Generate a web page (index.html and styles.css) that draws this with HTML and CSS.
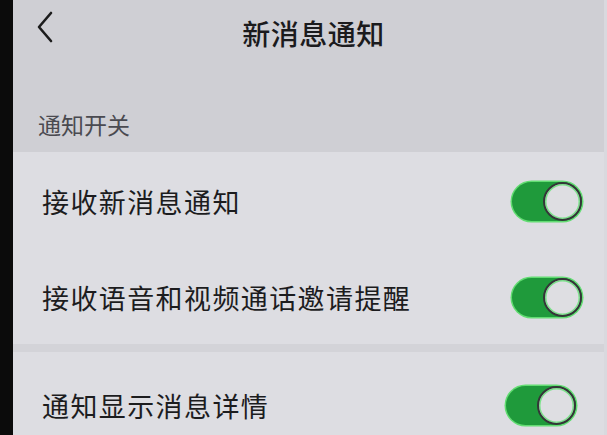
FILE: index.html
```html
<!DOCTYPE html>
<html lang="zh">
<head>
<meta charset="utf-8">
<link rel="stylesheet" href="styles.css">
</head>
<body>
<div class="phone">
  <div class="bezel"></div>
  <div class="screen">
    <header class="topbar">
      <svg class="back" width="20" height="34" viewBox="0 0 20 34"><path d="M16 3 L4 17 L16 31" fill="none" stroke="#1c1c1c" stroke-width="2.6" stroke-linecap="round" stroke-linejoin="round"/></svg>
      <h1 class="title">新消息通知</h1>
    </header>
    <div class="section-label">通知开关</div>
    <div class="card">
      <div class="row row-a">
        <span class="row-text">接收新消息通知</span>
        <span class="toggle"><span class="knob"></span></span>
      </div>
      <div class="row row-b">
        <span class="row-text">接收语音和视频通话邀请提醒</span>
        <span class="toggle"><span class="knob"></span></span>
      </div>
    </div>
    <div class="divider"></div>
    <div class="card">
      <div class="row row-c">
        <span class="row-text">通知显示消息详情</span>
        <span class="toggle toggle-shift"><span class="knob"></span></span>
      </div>
    </div>
  </div>
</div>
</body>
</html>
```

FILE: styles.css
```css
html, body {
  margin: 0;
  padding: 0;
  height: 100%;
  overflow: hidden;
  background: #cfcfd4;
  font-family: "Noto Sans CJK SC", "Noto Sans", sans-serif;
}
.phone {
  display: flex;
  height: 435px;
  overflow: hidden;
}
.bezel {
  width: 13px;
  flex: none;
  background: #0b0b0b;
}
.screen {
  flex: 1;
  display: flex;
  flex-direction: column;
  background: #cfcfd4;
  border-right: 3px solid #d9d9de;
}
.screen > * {
  flex: none;
}
.topbar {
  height: 66px;
  display: flex;
  align-items: center;
  justify-content: center;
  position: relative;
}
.back {
  position: absolute;
  left: 22px;
  top: 10px;
}
.title {
  margin: 0 0 0 10px;
  font-size: 28px;
  font-weight: 500;
  color: #1b1b1d;
  letter-spacing: 0.5px;
}
.section-label {
  height: 86px;
  box-sizing: border-box;
  padding: 43px 0 0 25px;
  font-size: 23px;
  line-height: 30px;
  color: #4a4a50;
}
.card {
  background: #dddde2;
}
.row {
  display: flex;
  align-items: center;
  justify-content: space-between;
  padding: 0 22px 0 29px;
}
.row-a { height: 98px; }
.row-b { height: 94px; }
.row-c { height: 106px; }
.row-text {
  font-size: 27px;
  color: #1c1c1e;
  letter-spacing: 1.4px;
}
.divider {
  height: 8px;
  background: #d3d3d8;
}
.toggle {
  width: 70px;
  height: 39px;
  box-sizing: border-box;
  border-radius: 20px;
  background: #1f9a3b;
  box-shadow: 0 0 0 1.5px #62dc72;
  display: flex;
  justify-content: flex-end;
  align-items: center;
}
.toggle-shift {
  margin-right: 6px;
}
.knob {
  width: 39px;
  height: 39px;
  box-sizing: border-box;
  border-radius: 50%;
  background: #dedee2;
  border: 2.5px solid #343638;
  box-shadow: inset 0 0 0 1.5px #7be38a;
}
```
